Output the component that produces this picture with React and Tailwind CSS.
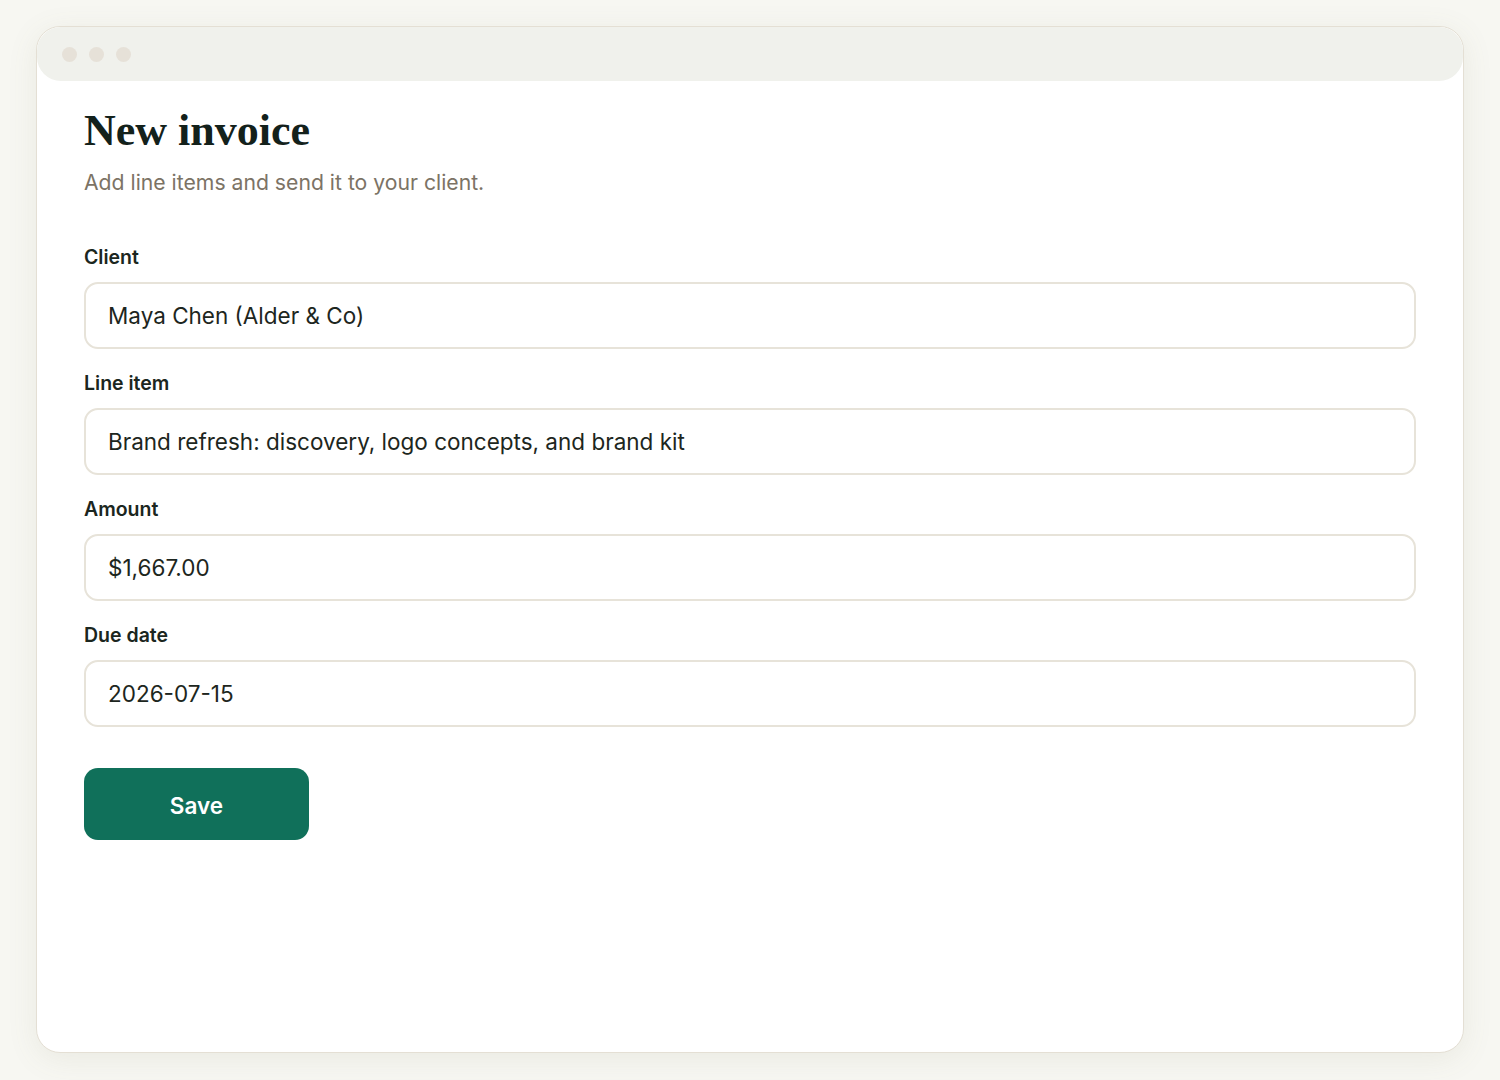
import React from "react";

const fields = [
  { label: "Client", value: "Maya Chen (Alder & Co)" },
  { label: "Line item", value: "Brand refresh: discovery, logo concepts, and brand kit" },
  { label: "Amount", value: "$1,667.00" },
  { label: "Due date", value: "2026-07-15" },
];

function Field({ label, value }) {
  return (
    <div className="flex flex-col">
      <label className="text-[19.5px] font-semibold text-[#1b2620] leading-[24px] mb-[13px]">{label}</label>
      <input
        readOnly
        value={value}
        className="h-[67px] w-full rounded-[14px] border-2 border-[#e7e3d9] bg-white px-[22px] text-[22.5px] text-[#1d2620] outline-none"
      />
    </div>
  );
}

export default function App() {
  return (
    <div className="min-h-screen bg-[#f7f7f2] px-[36px] pt-[26px] pb-[27px] font-['Inter','Noto_Sans',sans-serif]">
      <div className="flex h-[1027px] flex-col rounded-[24px] border border-[#e4dfd4] bg-white shadow-[0_6px_30px_rgba(120,115,90,0.10)]">
        <div className="flex h-[54px] items-center gap-[12px] rounded-[24px] bg-[#f0f1ec] pl-[25px]">
          <span className="h-[15px] w-[15px] rounded-full bg-[#e6e1d8]" />
          <span className="h-[15px] w-[15px] rounded-full bg-[#e6e1d8]" />
          <span className="h-[15px] w-[15px] rounded-full bg-[#e6e1d8]" />
        </div>
        <div className="flex flex-col px-[47px] pt-[25px]">
          <h1 className="font-['Liberation_Serif',serif] text-[44px] font-bold leading-[50px] text-[#13211b]">New invoice</h1>
          <p className="mt-[13px] text-[21.2px] leading-[26px] text-[#7c7365]">Add line items and send it to your client.</p>
          <div className="mt-[50px] flex flex-col gap-[22px]">
            {fields.map((f) => (
              <Field key={f.label} label={f.label} value={f.value} />
            ))}
          </div>
          <div className="mt-[41px]">
            <button className="h-[72px] w-[225px] rounded-[14px] bg-[#10705a] pt-[3px] text-[22.5px] font-semibold text-white">Save</button>
          </div>
        </div>
      </div>
    </div>
  );
}
